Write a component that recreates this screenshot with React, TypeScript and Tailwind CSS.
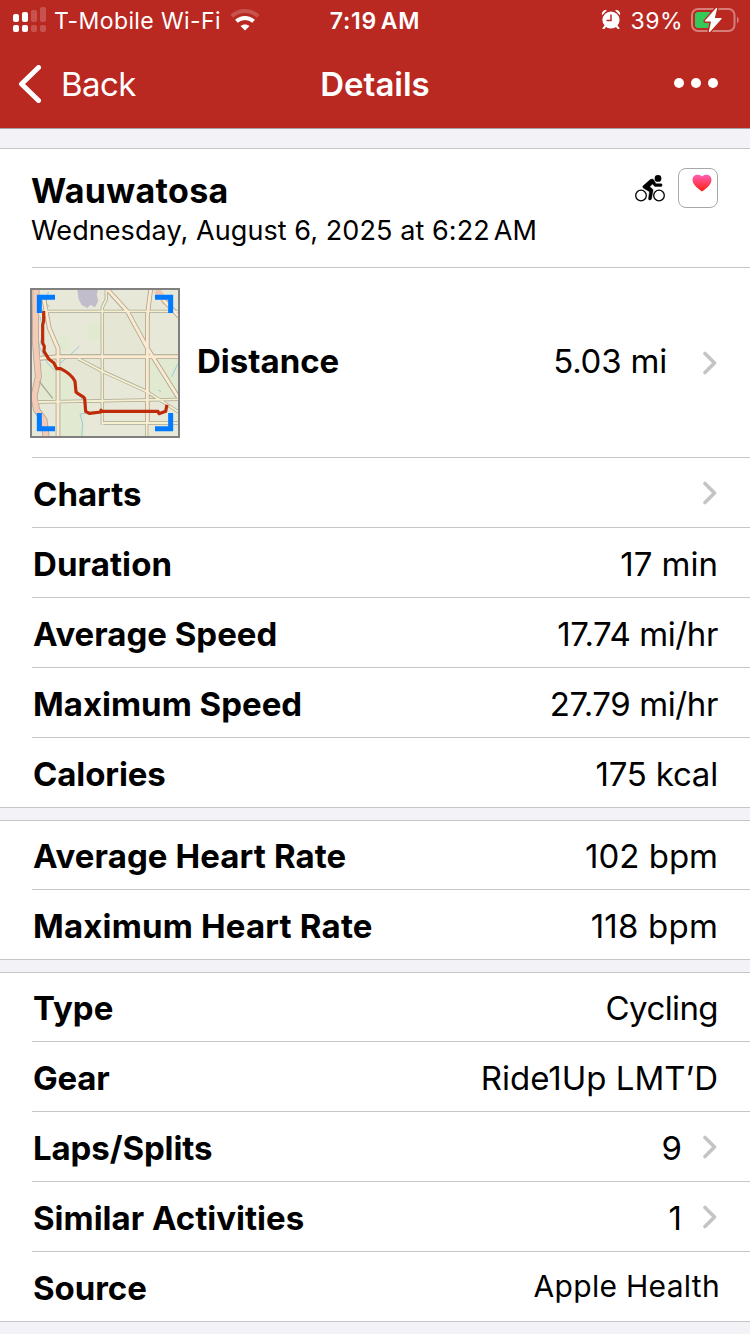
import React from "react";
import clsx from "clsx";

interface Row {
  label: string;
  value?: string;
  chevron?: boolean;
  labelClass?: string;
  valueClass?: string;
}

const speedRows: Row[] = [
  { label: "Charts", chevron: true },
  { label: "Duration", value: "17 min", labelClass: "tracking-[0.1px]" },
  { label: "Average Speed", value: "17.74 mi/hr", valueClass: "tracking-[-0.4px]" },
  { label: "Maximum Speed", value: "27.79 mi/hr", valueClass: "tracking-[-0.4px]" },
  { label: "Calories", value: "175 kcal", labelClass: "tracking-[-0.1px]", valueClass: "tracking-[-0.2px]" },
];

const heartRows: Row[] = [
  { label: "Average Heart Rate", value: "102 bpm", labelClass: "tracking-[0.1px]" },
  { label: "Maximum Heart Rate", value: "118 bpm", labelClass: "tracking-[0.18px]", valueClass: "tracking-[0.2px]" },
];

const infoRows: Row[] = [
  { label: "Type", value: "Cycling", valueClass: "tracking-[-0.6px]" },
  { label: "Gear", value: "Ride1Up LMT’D", labelClass: "tracking-[-0.2px]" },
  { label: "Laps/Splits", value: "9", chevron: true, labelClass: "tracking-[-0.1px]" },
  { label: "Similar Activities", value: "1", chevron: true },
  {
    label: "Source",
    value: "Apple Health",
    labelClass: "tracking-[-0.05px]",
    valueClass: "text-[30px] tracking-[0.3px] -mt-1 -mr-[2px]",
  },
];

const Chevron = () => (
  <svg viewBox="0 0 15 24" className="w-[15px] h-6 shrink-0" fill="none">
    <path d="M3 2.500 12.500 12 3 21.500" stroke="#c4c4c7" strokeWidth="3.600" strokeLinecap="round" strokeLinejoin="round" />
  </svg>
);

const StatusBar = () => (
  <div className="grid grid-cols-3 items-center h-[41px] pl-[13px] pr-[11px]">
    <div className="flex items-center">
      <svg viewBox="0 0 33 25" className="w-[33px] h-[25px] mb-[2px] shrink-0" fill="#fff">
        <rect x="0" y="7" width="6" height="8" rx="2" />
        <rect x="9" y="5" width="6" height="10" rx="2" />
        <rect x="18" y="3" width="6" height="12" rx="2" opacity=".2" />
        <rect x="27" y="0" width="6" height="15" rx="2" opacity=".2" />
        <rect x="0" y="18" width="6" height="7" rx="2" />
        <rect x="9" y="18" width="6" height="7" rx="2" />
        <rect x="18" y="18" width="6" height="7" rx="2" opacity=".2" />
        <rect x="27" y="18" width="6" height="7" rx="2" opacity=".2" />
      </svg>
      <span className="ml-2 pt-px text-[23px] tracking-[0.4px] whitespace-nowrap">T-Mobile Wi-Fi</span>
      <svg viewBox="0 0 30 22" className="ml-[9px] mb-px w-[30px] h-[22px] shrink-0" fill="none" stroke="#fff">
        <path d="M1.800 7.200a19.500 19.500 0 0 1 26.400 0" strokeWidth="4" opacity=".2" />
        <path d="M6.400 12.200a12.800 12.800 0 0 1 17.200 0" strokeWidth="4" />
        <path d="M15 15.400c1.800 0 3.300.6 4.500 1.700L15 21.600l-4.500-4.500c1.200-1.100 2.700-1.700 4.500-1.700Z" fill="#fff" stroke="none" />
      </svg>
    </div>
    <span className="pt-px text-center text-[23px] font-semibold tracking-[0.7px] pr-[2px]">
      7:19<span className="ml-1">AM</span>
    </span>
    <div className="flex items-center justify-end">
      <svg viewBox="0 0 20 20" className="w-5 h-5 mb-[3px]" fill="#fff">
        <circle cx="10" cy="11" r="8.600" />
        <path d="M1 6.300A4 4 0 0 1 6 1.200ZM19 6.300A4 4 0 0 0 14 1.200Z" />
        <path d="m4.500 17-2 2.400M15.500 17l2 2.400" stroke="#fff" strokeWidth="2" strokeLinecap="round" />
        <path d="M10 5.500v6H5.500" fill="none" stroke="#ba2822" strokeWidth="1.500" />
      </svg>
      <span className="ml-[9px] pt-px text-[23px] tracking-[0.5px]">39%</span>
      <svg viewBox="0 0 48 24" className="ml-2 mb-[2px] w-12 h-6" fill="none">
        <rect x="1" y="1" width="42.500" height="22" rx="6" stroke="#fff" strokeOpacity=".4" strokeWidth="2" />
        <path d="M46 8.500c2.300 1.400 2.300 5.600 0 7Z" fill="#fff" fillOpacity=".4" />
        <path d="M7 4h12v16H7a3 3 0 0 1-3-3V7a3 3 0 0 1 3-3Z" fill="#34c759" />
        <path d="M25.500.5 14.500 13h6.300l-2.300 10.500L30 10.500h-7Z" fill="#fff" stroke="#ba2822" strokeWidth="4" strokeLinejoin="round" />
        <path d="M25.500.5 14.500 13h6.300l-2.300 10.500L30 10.500h-7Z" fill="#fff" stroke="#fff" strokeWidth="1.200" strokeLinejoin="round" />
      </svg>
    </div>
  </div>
);

const NavBar = () => (
  <div className="grid grid-cols-3 items-center h-[87px] px-[18px] text-[33px]">
    <div className="flex items-center">
      <svg viewBox="0 0 23 38" className="w-[23px] h-[38px] mb-px" fill="none">
        <path d="M20.500 2.500 3.500 19l17 16.500" stroke="#fff" strokeWidth="5" strokeLinecap="round" strokeLinejoin="round" />
      </svg>
      <span className="ml-5 tracking-[-0.6px]">Back</span>
    </div>
    <span className="text-center font-semibold">Details</span>
    <div className="flex justify-end gap-[7px] pr-[14px] pb-[3px]">
      <span className="size-[10px] rounded-full bg-white" />
      <span className="size-[10px] rounded-full bg-white" />
      <span className="size-[10px] rounded-full bg-white" />
    </div>
  </div>
);

const Cyclist = () => (
  <svg viewBox="0 0 30 28" className="w-[30px] h-7" fill="none" stroke="#000">
    <circle cx="6" cy="20.500" r="5.300" strokeWidth="1.300" />
    <circle cx="24" cy="20.500" r="5.300" strokeWidth="1.300" />
    <circle cx="23" cy="3.400" r="3.400" fill="#000" stroke="none" />
    <path d="M8.200 10.800 15 4.800c1.600-1.200 3-.9 4 .5l2 3.400h5c1.500 0 1.500 2.800 0 2.800h-6.200L17.500 9l-2.800 2.700 2.500 2c.8.700 1 1.300.7 2.500L16.500 24c-.5 1.500-3.300 1.200-3-.6l1-6.700-5.900-3.500c-1-.7-1.200-1.600-.4-2.400Z" fill="#000" strokeWidth=".4" />
  </svg>
);

const RouteMap = () => (
  <svg viewBox="30 24 450 450" className="w-[150px] h-[150px] shrink-0" fill="none">
    <rect x="30" y="24" width="450" height="450" fill="#e7e8d7" />
    {/* parks and darker blocks */}
    <path d="M250 100h130v125H250ZM120 240h120v115H120Z" fill="#e5e6d3" />
    <path d="M205 130h42v50h-42ZM118 165h26v45h-26ZM60 250h60l45 70-20 40H60ZM388 235h90v120h-90ZM120 375h75v92h-75Z" fill="#e1e9d0" />
    <path d="M172 30h62l-4 14 5 18-10 20-14-8-9 10-17-9-9-17Z" fill="#c1bdcb" />
    {/* creeks */}
    <path d="M72 60 88 80M60 110l10 40-12 50 25 50 22 22M120 250l30-25 28-26M165 335l25 25M185 470l3-38-8-30 30-4M455 290l18-38M415 330l8 4M85 35l-6 30" stroke="#9dcbd6" strokeWidth="3" />
    {/* highway on the left */}
    <path d="M48 28 46 180 55 290 42 350 50 390 72 420 78 470" stroke="#b5a596" strokeWidth="21" strokeLinejoin="round" />
    <path d="M48 28 46 180 55 290 42 350 50 390 72 420 78 470" stroke="#f4cbb7" strokeWidth="16" strokeLinejoin="round" />
    <path d="m410 30 28 38" stroke="#f0c5b0" strokeWidth="20" />
    {/* streets */}
    <g stroke="#aaa694" strokeLinejoin="round">
      <path d="M60 94h418M55 366l420-8M247 434V82l12-24V28M247 429h230M380 429v40M175 236l72 38 132 60 100 64" strokeWidth="10" />
      <path d="M60 235 115 230h363M262 28l60 66 60 110 94 150M392 28l-10 80v320M72 60l16 85 26 60v264M430 60l48 50" strokeWidth="14" />
      <path d="m58 305 40 50" strokeWidth="4" />
    </g>
    <g stroke="#f4efcf" strokeWidth="5.500">
      <path d="M60 94h418M55 366l420-8M247 434V82l12-24V28M247 429h230M380 429v40M175 236l72 38 132 60 100 64" />
    </g>
    <g stroke="#fbe9d0" strokeWidth="9" strokeLinejoin="round">
      <path d="M60 235 115 230h363M262 28l60 66 60 110 94 150M392 28l-10 80v320M72 60l16 85 26 60v264M430 60l48 50" />
    </g>
    {/* ridden route */}
    <path
      d="M71 98v26l-3 10v55l5 10-1 15 15 24 14 10 9 18h12c20 10 35 22 43 38l3 32c8 10 22 10 26 20l3 38 11 6 35-4v-6 4h171l3 7 20-7 3-15"
      stroke="#bf2a08"
      strokeWidth="9.500"
      strokeLinejoin="round"
      strokeLinecap="square"
    />
    <path d="M105 52H58v47M405 52h47v47M58 399v47h47M452 399v47h-47" stroke="#007aff" strokeWidth="15" />
    <rect x="33" y="27" width="444" height="444" stroke="#808080" strokeWidth="6" />
  </svg>
);

const RowItem = ({ row, last }: { row: Row; last: boolean }) => (
  <div
    className={clsx(
      "flex items-center justify-between h-[70px] pr-8 text-[33px] border-b border-[#c6c6c8]",
      last ? "pl-8" : "ml-8"
    )}
  >
    <span className={clsx("font-bold pt-1 pl-px", row.labelClass)}>{row.label}</span>
    <span className="flex items-center">
      <span className={clsx("pt-1", row.valueClass)}>{row.value}</span>
      {row.chevron && (
        <span className="ml-5 mr-px pt-px">
          <Chevron />
        </span>
      )}
    </span>
  </div>
);

const Section = ({ rows }: { rows: Row[] }) => (
  <>
    {rows.map((row, i) => (
      <RowItem key={row.label} row={row} last={i === rows.length - 1} />
    ))}
  </>
);

export default function App() {
  return (
    <div className="w-[750px] h-[1334px] overflow-hidden bg-[#f2f2f7] text-black font-['Inter',sans-serif]">
      <header className="bg-[#ba2822] text-white border-b border-[#a5a5a9] h-[129px]">
        <StatusBar />
        <NavBar />
      </header>

      <section className="mt-[19px] bg-white border-t border-[#c6c6c8]">
        <div className="ml-8 h-[119px] pr-8 flex justify-between border-b border-[#c6c6c8]">
          <div className="pt-[21px] -ml-px">
            <h1 className="text-[34px] leading-[42px] font-bold tracking-[0.35px]">Wauwatosa</h1>
            <p className="text-[27px] leading-[38px] tracking-[0.08px]">
              Wednesday, August 6, 2025 at 6:22<span className="ml-1">AM</span>
            </p>
          </div>
          <div className="flex gap-[13px] pt-[19px]">
            <div className="pt-[7px]">
              <Cyclist />
            </div>
            <div className="w-10 h-10 rounded-[8px] border border-[#a8a8a8] bg-white flex justify-center pt-[5px] pl-2">
              <svg viewBox="0 0 20 18" className="w-5 h-[18px]">
                <defs>
                  <linearGradient id="heart" x1="0" y1="0" x2="0" y2="1">
                    <stop offset="0" stopColor="#ff5fb4" />
                    <stop offset="1" stopColor="#ff1f0f" />
                  </linearGradient>
                </defs>
                <path d="M10 17.500C5 14 .5 10.500.5 5.800.5 2.800 2.700.800 5.300.800c2 0 3.700.5 4.700 1.600 1-1.100 2.700-1.600 4.700-1.600 2.600 0 4.800 2 4.800 5 0 4.700-4.500 8.200-9.500 11.700Z" fill="url(#heart)" />
              </svg>
            </div>
          </div>
        </div>
        <div className="flex">
          <div className="w-[30px] shrink-0" />
          <div className="relative flex-1 h-[190px] flex items-center pr-[33px] text-[33px] after:absolute after:bottom-0 after:left-[2px] after:right-0 after:h-px after:bg-[#c6c6c8]">
            <RouteMap />
            <span className="ml-[17px] pb-[2px] font-bold">Distance</span>
            <span className="ml-auto mr-[35px] pb-[2px] tracking-[-0.2px]">5.03 mi</span>
            <Chevron />
          </div>
        </div>
        <Section rows={speedRows} />
      </section>

      <section className="mt-3 bg-white border-t border-[#c6c6c8] [&>div:first-child]:h-[69px]">
        <Section rows={heartRows} />
      </section>

      <section className="mt-3 bg-white border-t border-[#c6c6c8] [&>div:first-child]:h-[69px]">
        <Section rows={infoRows} />
      </section>
    </div>
  );
}
